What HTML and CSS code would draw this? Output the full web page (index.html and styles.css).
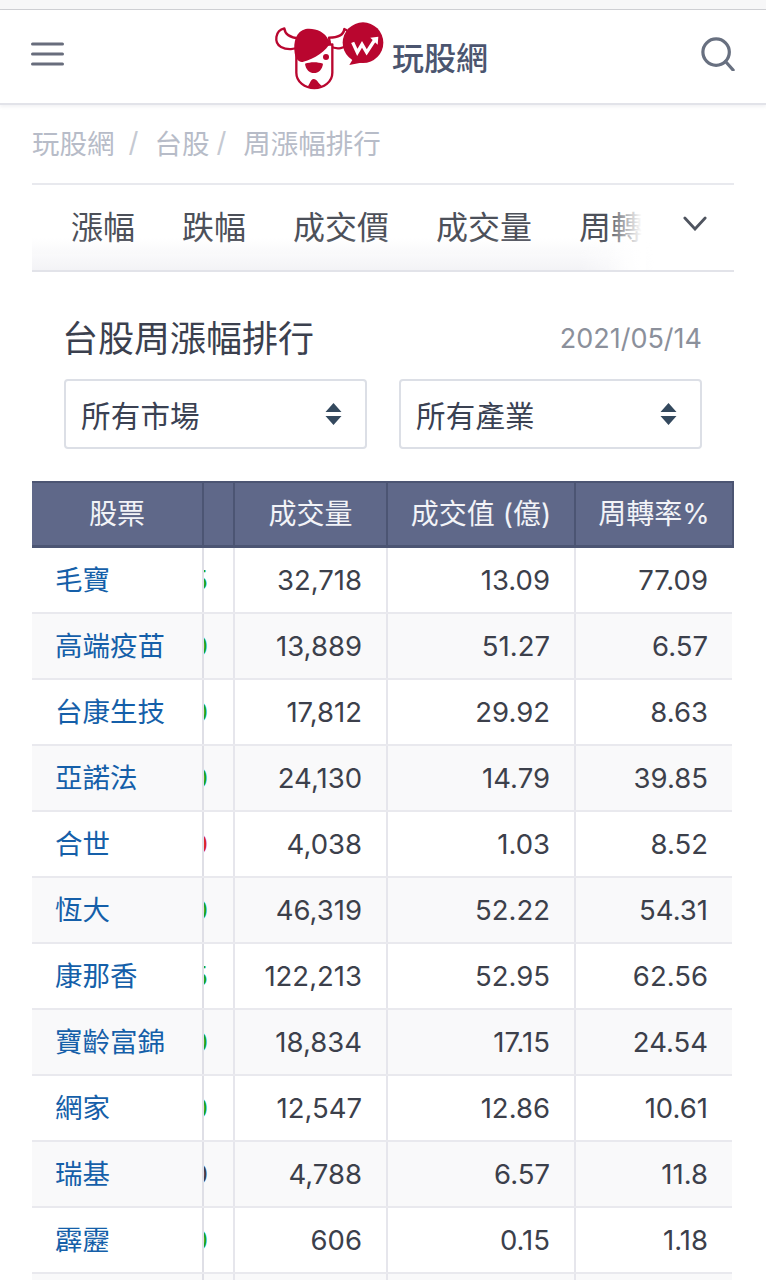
FILE: index.html
```html
<!DOCTYPE html>
<html lang="zh-Hant">
<head>
<meta charset="utf-8">
<title>台股周漲幅排行</title>
<link rel="stylesheet" href="styles.css">
</head>
<body>
<div class="status-strip"></div>
<header class="site-header">
  <svg class="menu-icon" viewBox="0 0 33 24"><path d="M1.5 2h30M1.5 12h30M1.5 22h30"/></svg>
  <div class="brand">
    <svg class="logo" viewBox="45 20 330 210">
      <path class="horn" d="M76 42C48 48 44 86 66 98c18 10 42 8 60-2l-6-24C94 70 78 62 76 42z"/>
      <path class="horn" d="M256 44c-2 16-16 26-46 26l4 26c18 10 46 8 56-12 8-16 2-34-14-40z"/>
      <path class="face" d="M112 100v75c0 28 26 46 54 46s54-18 54-46V90z"/>
      <path class="red" d="M208 76c-10-24-42-36-68-32-28 6-38 38-33 72 3 18 14 30 26 26 32-8 70-32 82-60z"/>
      <circle class="red" cx="201" cy="128" r="9"/>
      <path class="red" d="M138 148c16-6 38-6 54 0-2 18-14 28-27 28s-25-10-27-28z"/>
      <path class="red" d="M146 216c6-4 8-22 18-22s14 14 24 20c-6 6-36 8-42 2z"/>
      <circle class="red" cx="312" cy="85" r="61"/>
      <path class="red" d="M284 130l-13 22 42-8z"/>
      <path class="logo-w" d="M281 84l14 30 14-24 14 24 26-40"/>
      <path class="logo-tip" d="M334 70l24-3-2 24z"/>
    </svg>
    <span class="brand-name">玩股網</span>
  </div>
  <svg class="search-icon" viewBox="0 0 36 36"><circle cx="16" cy="16" r="14"/><path d="M26 26l8 9"/></svg>
</header>

<main class="content">
  <nav class="breadcrumb"><span>玩股網</span><i class="sep-wide">/</i><span>台股</span><i class="sep">/</i><span>周漲幅排行</span></nav>

  <div class="tabs">
    <div class="tab-list">
      <span>漲幅</span><span>跌幅</span><span>成交價</span><span>成交量</span><span>周轉</span>
    </div>
    <div class="tab-shade"></div>
    <div class="tab-fade"></div>
    <svg class="tab-chevron" viewBox="0 0 26 16"><path d="M2 2l11 12L24 2"/></svg>
  </div>

  <section class="panel">
    <div class="panel-head">
      <h1>台股周漲幅排行</h1>
      <span class="date">2021/05/14</span>
    </div>
    <div class="filters">
      <div class="select">所有市場<svg viewBox="0 0 16 22"><path d="M8 0l8 9H0zM8 22l8-9H0z"/></svg></div>
      <div class="select">所有產業<svg viewBox="0 0 16 22"><path d="M8 0l8 9H0zM8 22l8-9H0z"/></svg></div>
    </div>
  </section>

  <div class="table">
    <div class="row head">
      <div class="c-name">股票</div><div class="c-clip"></div><div>成交量</div><div>成交值 (億)</div><div>周轉率%</div>
    </div>
    <div class="row"><div class="c-name"><a>毛寶</a></div><div class="c-clip up">5</div><div>32,718</div><div>13.09</div><div>77.09</div></div>
    <div class="row"><div class="c-name"><a>高端疫苗</a></div><div class="c-clip up">0</div><div>13,889</div><div>51.27</div><div>6.57</div></div>
    <div class="row"><div class="c-name"><a>台康生技</a></div><div class="c-clip up">0</div><div>17,812</div><div>29.92</div><div>8.63</div></div>
    <div class="row"><div class="c-name"><a>亞諾法</a></div><div class="c-clip up">0</div><div>24,130</div><div>14.79</div><div>39.85</div></div>
    <div class="row"><div class="c-name"><a>合世</a></div><div class="c-clip down">0</div><div>4,038</div><div>1.03</div><div>8.52</div></div>
    <div class="row"><div class="c-name"><a>恆大</a></div><div class="c-clip up">0</div><div>46,319</div><div>52.22</div><div>54.31</div></div>
    <div class="row"><div class="c-name"><a>康那香</a></div><div class="c-clip up">5</div><div>122,213</div><div>52.95</div><div>62.56</div></div>
    <div class="row"><div class="c-name"><a>寶齡富錦</a></div><div class="c-clip up">0</div><div>18,834</div><div>17.15</div><div>24.54</div></div>
    <div class="row"><div class="c-name"><a>網家</a></div><div class="c-clip up">0</div><div>12,547</div><div>12.86</div><div>10.61</div></div>
    <div class="row"><div class="c-name"><a>瑞基</a></div><div class="c-clip flat">0</div><div>4,788</div><div>6.57</div><div>11.8</div></div>
    <div class="row"><div class="c-name"><a>霹靂</a></div><div class="c-clip up">0</div><div>606</div><div>0.15</div><div>1.18</div></div>
    <div class="row"><div class="c-name"></div><div class="c-clip"></div><div></div><div></div><div></div></div>
  </div>
</main>
</body>
</html>
```
FILE: styles.css
```css
* { box-sizing: border-box; }
html, body { margin: 0; padding: 0; height: 1280px; overflow: hidden; }
body {
  background: #fff;
  color: #3a3f4c;
  font-family: Inter, "Noto Sans CJK TC", sans-serif;
}

.status-strip { height: 10px; background: #f7f7f8; border-bottom: 1px solid #cfd0d4; }

.site-header {
  height: 95px;
  display: flex;
  align-items: center;
  justify-content: space-between;
  padding: 0 31px;
  background: #fff;
  border-bottom: 2px solid #e2e3e9;
  box-shadow: 0 2px 3px rgba(90, 95, 120, .08);
  position: relative;
}
.menu-icon { width: 33px; height: 24px; margin-top: -6px; }
.menu-icon path { fill: none; stroke: #686d7c; stroke-width: 3; stroke-linecap: round; }
.search-icon { width: 34px; height: 34px; margin-top: -6px; }
.search-icon circle, .search-icon path { fill: none; stroke: #687080; stroke-width: 3.4; stroke-linecap: round; }

.brand { display: flex; align-items: flex-end; margin-left: -3px; margin-top: -2px; }
.logo { width: 110px; height: 70px; display: block; }
.logo .red { fill: #b9062f; }
.logo .horn, .logo .face { fill: #fff; stroke: #b9062f; stroke-width: 7; stroke-linejoin: round; }
.logo-w { fill: none; stroke: #fff; stroke-width: 10; stroke-linejoin: miter; }
.logo-tip { fill: #fff; }
.brand-name {
  font-size: 32px;
  line-height: 34px;
  color: #4b556f;
  font-weight: 500;
  margin: 0 0 15px 8px;
}

.content { margin: 0 32px; }

.breadcrumb {
  height: 78px;
  display: flex;
  align-items: center;
  padding-bottom: 4px;
  font-size: 27.5px;
  color: #b7bcc8;
}
.breadcrumb i { font-style: normal; color: #c5c9d2; }
.sep-wide { margin: 0 16px 0 14px; }
.sep { margin: 0 17px 0 7px; }

.tabs {
  position: relative;
  height: 89px;
  border-top: 2px solid #e8e9ee;
  border-bottom: 2px solid #e2e3e9;
  overflow: hidden;
}
.tab-list {
  display: flex;
  gap: 47px;
  padding: 23px 0 0 39px;
  font-size: 32px;
  line-height: 40px;
  color: #4c5059;
  white-space: nowrap;
}
.tab-shade {
  position: absolute;
  left: 0; right: 80px; bottom: 0;
  height: 32px;
  background: linear-gradient(to bottom, rgba(243, 243, 246, 0), #f3f3f6);
  -webkit-mask-image: linear-gradient(to right, #000 88%, transparent);
  mask-image: linear-gradient(to right, #000 88%, transparent);
}
.tab-fade {
  position: absolute;
  left: 574px; top: 0; bottom: 0;
  width: 40px;
  background: linear-gradient(to right, rgba(255, 255, 255, 0), #fff 90%);
}
.tab-chevron {
  position: absolute;
  left: 651px; top: 31px;
  width: 24px; height: 15px;
}
.tab-chevron path { fill: none; stroke: #4f545f; stroke-width: 3; stroke-linecap: round; }

.panel { padding: 0 32px; }
.panel-head {
  display: flex;
  justify-content: space-between;
  align-items: center;
  padding-top: 42px;
}
.panel-head h1 {
  margin: 0 0 0 -2px;
  font-size: 36px;
  line-height: 50px;
  font-weight: 400;
  color: #3b404e;
}
.date { font-size: 27px; color: #8b909b; padding-bottom: 2px; }

.filters { display: flex; gap: 32px; margin-top: 15px; }
.select {
  flex: 1;
  height: 70px;
  border: 2px solid #dcdfe6;
  border-radius: 4px;
  display: flex;
  align-items: center;
  justify-content: space-between;
  padding: 0 23px 0 15px;
  font-size: 29.5px;
  color: #3a4152;
  letter-spacing: .2px;
}
.select svg { width: 17px; height: 22px; fill: #34495e; }

.table { margin-top: 32px; width: 702px; }
.row {
  display: grid;
  grid-template-columns: 172px 29px 153px 188px 158px;
  height: 66px;
  font-size: 27.5px;
  color: #3c404b;
  width: 700px;
  border-bottom: 2px solid #e9e9ee;
}
.row:nth-child(odd) { background: #f9f9fa; }
.row > div {
  display: flex;
  align-items: center;
  justify-content: flex-end;
  padding: 0 24px 1px 0;
  border-left: 2px solid #e6e6ec;
  white-space: nowrap;
  overflow: hidden;
}
.row .c-name {
  justify-content: flex-start;
  padding: 0 0 5px 23px;
  border-left: 0;
  border-right: 2px solid #dfdfe6;
  font-size: 27.5px;
}
.row > .c-clip { padding: 0 25px 1px 0; border-left: 0; }
.c-name a { color: #155fa9; }
.up { color: #1aa521; }
.down { color: #d9262c; }
.flat { color: #3c404b; }

.row.head {
  background: #5f6889;
  color: #fff;
  width: 702px;
  height: 67px;
  border-top: 2px solid #4c5573;
  border-bottom: 3px solid #4c5573;
  border-right: 2px solid #4c5573;
}
.row.head > div {
  border-left-color: #4c5573;
  font-size: 28px;
  color: #f2f3f7;
  justify-content: center;
  padding: 0 0 4px;
}
.row.head .c-name { border-right-color: #4c5573; }
```
